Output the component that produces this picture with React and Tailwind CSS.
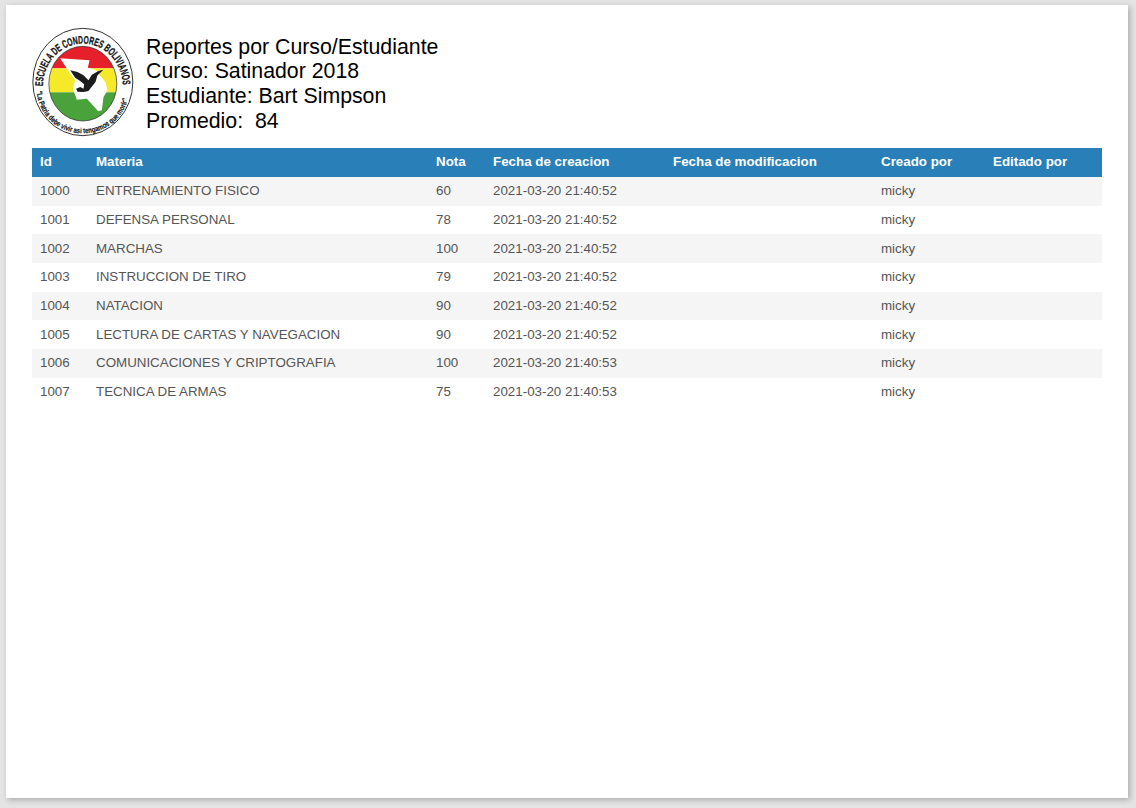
const rows = [
  ["1000", "ENTRENAMIENTO FISICO", "60", "2021-03-20 21:40:52"],
  ["1001", "DEFENSA PERSONAL", "78", "2021-03-20 21:40:52"],
  ["1002", "MARCHAS", "100", "2021-03-20 21:40:52"],
  ["1003", "INSTRUCCION DE TIRO", "79", "2021-03-20 21:40:52"],
  ["1004", "NATACION", "90", "2021-03-20 21:40:52"],
  ["1005", "LECTURA DE CARTAS Y NAVEGACION", "90", "2021-03-20 21:40:52"],
  ["1006", "COMUNICACIONES Y CRIPTOGRAFIA", "100", "2021-03-20 21:40:53"],
  ["1007", "TECNICA DE ARMAS", "75", "2021-03-20 21:40:53"],
];

const columns = "grid grid-cols-[56px_340px_57px_180px_208px_112px_117px] items-center";

const Logo = () => (
  <svg viewBox="36 20 305 330" className="w-[102px] h-[110px] shrink-0">
    <defs>
      <path id="arcTop" d="M68,200 A120,130 0 0 1 308,200" />
      <path id="arcBottom" d="M50,208 A138,131 0 0 0 326,208" />
      <clipPath id="inner">
        <ellipse cx="188" cy="190" rx="102" ry="112" />
      </clipPath>
    </defs>
    <ellipse cx="188" cy="185" rx="150" ry="161" fill="#fff" stroke="#333" strokeWidth="3" />
    <g clipPath="url(#inner)">
      <rect x="80" y="70" width="220" height="74" fill="#e5202b" />
      <rect x="80" y="144" width="220" height="72" fill="#f5e92a" />
      <rect x="80" y="216" width="220" height="90" fill="#4aa23a" />
    </g>
    <ellipse cx="188" cy="190" rx="102" ry="112" fill="none" stroke="#222" strokeWidth="2" />
    <path
      d="M120,114 L208,120 L203,142 L226,148 L256,186 L262,210 L250,230 L245,270 L234,273 L214,250 L200,235 L170,238 L158,205 L165,180 L150,160 Z"
      fill="#fff"
    />
    <path
      d="M150,150 L172,155 L190,165 L205,180 L215,163 L235,152 L250,148 L232,165 L226,185 L214,200 L205,212 L190,215 L172,214 L168,205 L180,200 L190,205 L192,192 L180,182 L165,172 Z"
      fill="#1c1c1c"
    />
    <text fontFamily="'Liberation Sans', sans-serif" fontWeight="700" fontSize="33" fill="#111" stroke="#111" strokeWidth="0.8">
      <textPath href="#arcTop" startOffset="2" textLength="385" lengthAdjust="spacingAndGlyphs">
        ESCUELA DE CONDORES BOLIVIANOS
      </textPath>
    </text>
    <text fontFamily="'Liberation Sans', sans-serif" fontWeight="700" fontSize="23" fill="#111" stroke="#111" strokeWidth="0.5">
      <textPath href="#arcBottom" startOffset="4" textLength="390" lengthAdjust="spacingAndGlyphs">
        "La Patria debe vivir asi tengamos que morir"
      </textPath>
    </text>
  </svg>
);

const App = () => {
  return (
    <div className="min-h-[808px] bg-[#e4e4e4] pl-[6px] pr-2 pt-[5px] pb-[10px] font-['Liberation_Sans',Arial,sans-serif]">
      <div className="h-[793px] w-[1122px] bg-white shadow-[2px_2px_6px_rgba(0,0,0,0.25)] px-[26px] pt-[22px]">
        {/* HEADER */}
        <div className="flex items-center gap-[12px] h-[110px] text-black text-[21.3px] leading-[24.6px]">
          <Logo />
          <div className="pt-[4px]">
            <div>Reportes por Curso/Estudiante</div>
            <div>Curso: Satinador 2018</div>
            <div>Estudiante: Bart Simpson</div>
            <div className="whitespace-pre">Promedio:  84</div>
          </div>
        </div>

        {/* TABLE */}
        <div className="mt-[11px] w-[1070px] text-[13.35px]">
          <div className={`${columns} h-[29px] bg-[#2980b9] text-white font-bold [&>div]:pl-2`}>
            <div>Id</div>
            <div>Materia</div>
            <div>Nota</div>
            <div>Fecha de creacion</div>
            <div>Fecha de modificacion</div>
            <div>Creado por</div>
            <div>Editado por</div>
          </div>
          {rows.map((row, i) => (
            <div
              key={row[0]}
              className={`${columns} h-[28.67px] text-[#555555] [&>div]:pl-2 ${i % 2 === 0 ? "bg-[#f5f5f5]" : "bg-white"}`}
            >
              <div>{row[0]}</div>
              <div>{row[1]}</div>
              <div>{row[2]}</div>
              <div>{row[3]}</div>
              <div></div>
              <div>micky</div>
              <div></div>
            </div>
          ))}
        </div>
      </div>
    </div>
  );
};

export default App;
